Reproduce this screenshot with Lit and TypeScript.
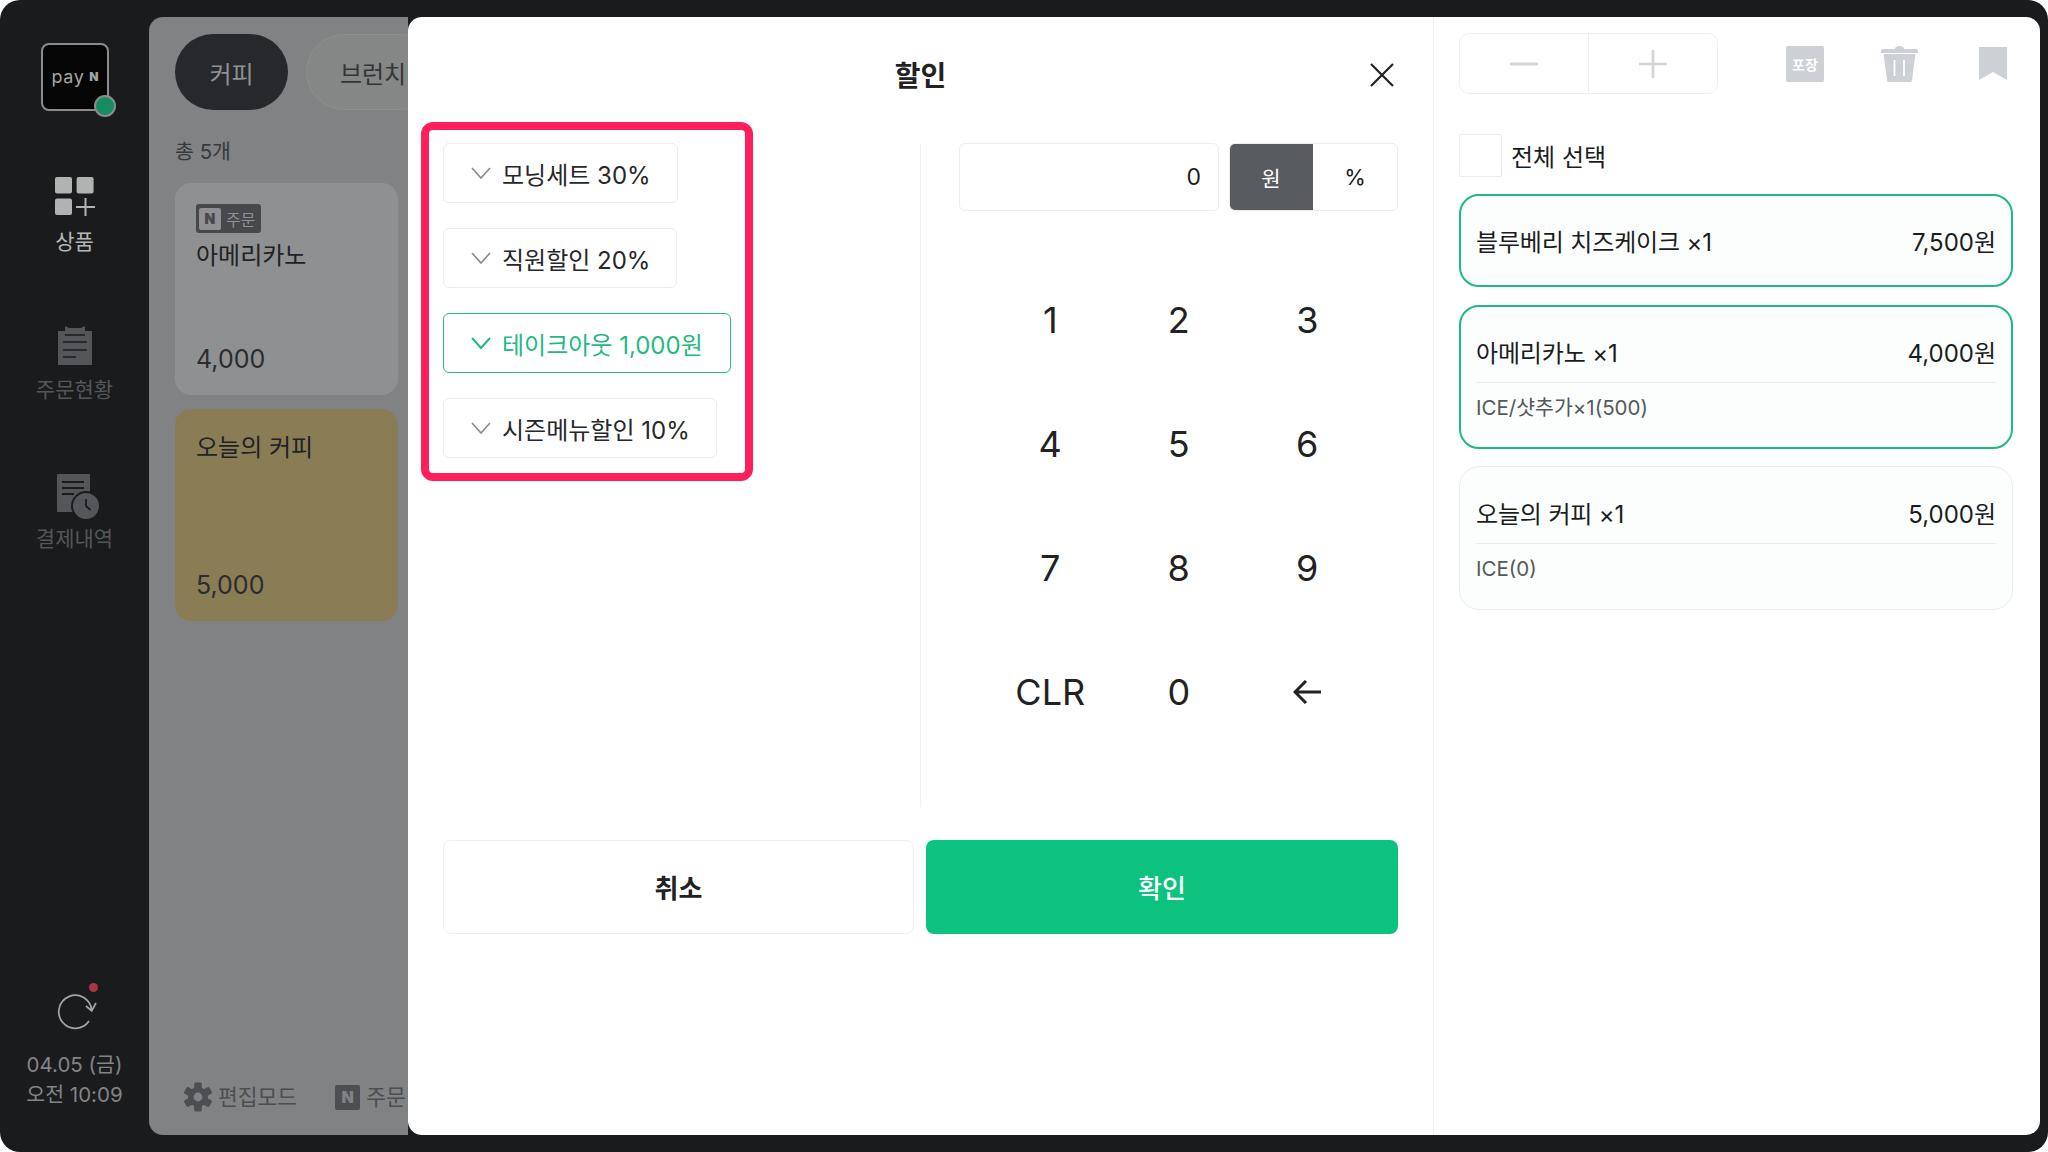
import { LitElement, html, css, svg } from "lit";
import { customElement } from "lit/decorators.js";

const gear = svg`<svg width="28" height="30" viewBox="0 0 28 30">
  <g fill="#4c4e51">
    <circle cx="14" cy="15" r="10"/>
    ${[0, 60, 120, 180, 240, 300].map(
      (a) => svg`<rect x="10.2" y="0.5" width="7.6" height="7" rx="1.5" transform="rotate(${a} 14 15)"/>`
    )}
  </g>
  <circle cx="14" cy="15" r="4.4" fill="#808284"/>
</svg>`;

const check = (c: string, w: number) => svg`<svg class="chk" width="20" height="14" viewBox="0 0 20 14"><path d="M1 2l9 10 9-10" fill="none" stroke="${c}" stroke-width="${w}"/></svg>`;

@customElement("app-root")
export class AppRoot extends LitElement {
  static styles = css`
    :host { display: block; width: 2048px; height: 1152px; background: #fff; font-family: Inter, "Noto Sans CJK KR", sans-serif; color: #1c1c1e; overflow: hidden; }
    * { box-sizing: border-box; }
    .frame { width: 2048px; height: 1152px; background: #1a1b1d; border-radius: 20px; display: flex; }
    .side { width: 149px; height: 1152px; display: flex; flex-direction: column; align-items: center; padding: 43px 0 42px; flex: none; }
    .logo { position: relative; width: 68px; height: 68px; margin-left: 1px; background: #050505; border: 2.5px solid #8b8c8d; border-radius: 8px; display: flex; align-items: center; justify-content: center; gap: 5px; color: #a3a4a4; font-size: 18px; line-height: 18px; letter-spacing: .6px; }
    .logo b { font-size: 12px; font-weight: 900; color: #a3a4a4; letter-spacing: 0; }
    .dot { position: absolute; right: -8.5px; bottom: -7.5px; width: 22px; height: 22px; border-radius: 50%; background: #168c60; border: 2px solid #8b8c8d; }
    .nav { display: flex; flex-direction: column; align-items: center; font-size: 21px; line-height: 26px; color: #54565a; white-space: nowrap; }
    .nav svg { display: block; }
    .n1 { margin-top: 66px; color: #b6b7b7; }
    .n1 svg { margin-left: 2px; }
    .n1 span { margin-top: 12px; }
    .n2 { margin-top: 68px; }
    .n2 span { margin-top: 12px; }
    .n3 { margin-top: 71px; }
    .n3 svg { margin-left: 8px; }
    .n3 span { margin-top: 7px; }
    .sideBottom { margin-top: auto; display: flex; flex-direction: column; align-items: center; font-size: 20.5px; line-height: 30px; color: #838485; white-space: nowrap; }
    .refresh { position: relative; width: 40px; height: 40px; margin: 0 0 20px 4px; }
    .refresh i { position: absolute; left: 32px; top: -7px; width: 9px; height: 9px; border-radius: 50%; background: #b0343f; }
    .main { flex: none; width: 1891px; height: 1118px; margin-top: 17px; display: flex; border-radius: 14px; overflow: hidden; }
    .under { flex: none; width: 259px; background: #808284; padding: 17px 0 23px 26px; display: flex; flex-direction: column; overflow: hidden; white-space: nowrap; }
    .pills { display: flex; gap: 18px; }
    .pill { flex: none; height: 76px; width: 113px; border-radius: 38px; display: flex; align-items: center; justify-content: center; font-size: 24px; background: #26282b; color: #8f9192; }
    .pill.off { width: 134px; background: #858686; border: 1px solid #8d8e8e; color: #333537; }
    .total { margin: 27px 0 16px; font-size: 20.5px; line-height: 30px; color: #37393b; }
    .card { width: 223px; height: 212px; border-radius: 16px; background: #8f9091; padding: 21px 0 19px 21px; display: flex; flex-direction: column; margin-bottom: 14px; color: #212224; }
    .card.y { background: #8a7d55; padding-top: 22px; }
    .badge { width: 65px; height: 29px; background: #46484b; border-radius: 3px; display: flex; align-items: center; gap: 5px; padding-left: 3px; font-size: 16px; color: #8f9091; margin-bottom: 6px; }
    .nbox { width: 22px; height: 22px; background: #8f9091; border-radius: 2px; color: #46484b; font-size: 14px; font-weight: 900; display: flex; align-items: center; justify-content: center; }
    .cname { font-size: 24px; line-height: 34px; }
    .cprice { margin-top: auto; font-size: 25px; line-height: 34px; color: #2b2c2e; }
    .tools { margin-top: auto; display: flex; align-items: center; padding-left: 9px; font-size: 21.5px; line-height: 30px; color: #4c4e51; }
    .tools span { margin-left: 6px; }
    .nsq { width: 25px; height: 25px; margin-left: 38px; background: #4c4e51; border-radius: 2px; color: #808284; font-size: 16px; font-weight: 900; display: flex; align-items: center; justify-content: center; }
    .modal { flex: none; width: 1025px; background: #fff; border-radius: 14px 0 0 14px; display: flex; flex-direction: column; }
    .mhead { position: relative; height: 105px; padding-top: 8px; display: flex; align-items: center; justify-content: center; }
    .title { font-size: 28px; font-weight: 600; color: #222; }
    .close { position: absolute; left: 962px; top: 46px; }
    .mbody { display: flex; height: 685px; }
    .left { flex: none; width: 512px; padding-left: 13px; }
    .redbox { width: 332px; height: 359px; border: 8px solid #ff1f5b; border-radius: 12px; padding: 13px 0 0 14px; display: flex; flex-direction: column; align-items: flex-start; gap: 26px; }
    .chip { height: 60px; padding: 0 26px 0 27px; border: 1px solid #ebebeb; border-radius: 6px; display: flex; align-items: center; gap: 11px; font-size: 24px; white-space: nowrap; color: #26272a; background: #fff; margin-bottom: -1px; }
    .chip.on { border: 1.5px solid #27bd8a; color: #1fb985; padding-right: 27px; }
    .vline { width: 1px; height: 664px; margin-top: 21px; background: #f1f1f2; flex: none; }
    .pad { width: 439px; margin-left: 38px; padding-top: 21px; flex: none; }
    .inrow { display: flex; gap: 10px; height: 68px; }
    .amount { width: 260px; border: 1px solid #ececec; border-radius: 6px; display: flex; align-items: center; justify-content: flex-end; padding-right: 17px; font-size: 23px; }
    .toggle { width: 169px; display: flex; border: 1px solid #ececec; border-radius: 6px; overflow: hidden; font-size: 22px; }
    .toggle div { flex: 1; display: flex; align-items: center; justify-content: center; }
    .toggle .act { background: #585b60; color: #fff; margin: -1px 0 -1px -1px; font-size: 21px; }
    .keys { display: grid; grid-template-columns: repeat(3, 128.5px); grid-template-rows: repeat(4, 124px); padding-left: 27px; margin-top: 47px; }
    .keys div { display: flex; align-items: center; justify-content: center; font-size: 36px; color: #222; }
    .mfoot { display: flex; gap: 12px; padding: 33px 35px 0; }
    .btn { height: 94px; border-radius: 8px; display: flex; align-items: center; justify-content: center; font-size: 26px; padding-bottom: 2px; }
    .cancel { width: 471px; border: 1px solid #efefef; font-weight: 600; color: #222; }
    .ok { width: 472px; background: #0bc27e; color: #fff; font-weight: 500; }
    .right { flex: 1; background: #fff; border-left: 1px solid #f0f0f0; border-radius: 0 14px 14px 0; padding: 16px 24px 0 25px; }
    .topbar { display: flex; align-items: center; height: 61px; }
    .stepper { width: 259px; height: 61px; display: flex; border: 1px solid #efefef; border-radius: 10px; }
    .stepper div { flex: 1; display: flex; align-items: center; justify-content: center; }
    .stepper div + div { border-left: 1px solid #efefef; }
    .slots { display: flex; margin-left: 40px; }
    .slot { width: 94px; display: flex; align-items: center; justify-content: center; }
    .pk { width: 38px; height: 36px; background: #cdd0d4; border-radius: 2px; color: #fff; font-size: 14px; font-weight: 600; display: flex; align-items: center; justify-content: center; }
    .all { display: flex; align-items: center; gap: 9px; margin-top: 40px; height: 43px; font-size: 24px; }
    .box { width: 43px; height: 43px; border: 1px solid #ebebeb; border-radius: 2px; }
    .item { width: 554px; border: 1px solid #e9ecec; border-radius: 20px; background: #fbfefd; padding: 0 16px 0 16px; }
    .item.sel { border: 2px solid #1fb985; padding: 0 15px 0 15px; }
    .i1 { height: 93px; margin-top: 17px; display: flex; align-items: center; padding-bottom: 2px; }
    .i2 { height: 144px; margin-top: 18px; }
    .i3 { height: 144px; margin-top: 17px; }
    .rowx { display: flex; width: 100%; justify-content: space-between; align-items: center; font-size: 24px; white-space: nowrap; }
    .rowx span:first-child { letter-spacing: -.15px; }
    .i2 .rowx, .i3 .rowx { height: 61px; margin-top: 14px; border-bottom: 1px solid #ececec; box-sizing: content-box; }
    .i3 .rowx { margin-top: 15px; }
    .sub { font-size: 20.5px; line-height: 50px; color: #55585c; }
  `;

  render() {
    return html`<div class="frame">
      <aside class="side">
        <div class="logo">pay<b>N</b><div class="dot"></div></div>
        <div class="nav n1">
          <svg width="41" height="40" viewBox="0 0 41 40"><g fill="#b1b2b2"><rect width="17" height="16.5" rx="2"/><rect x="21.6" width="17" height="16.5" rx="2"/><rect y="21.5" width="17" height="16.5" rx="2"/></g><path d="M21 30h19M30.5 21v18" stroke="#b1b2b2" stroke-width="2" fill="none"/></svg>
          <span>상품</span>
        </div>
        <div class="nav n2">
          <svg width="36" height="42" viewBox="0 0 36 42"><path d="M1 8h7V3l4 2h12l4-2v5h7v34H1z" fill="#54565a"/><path d="M8 12h20M6 19h24M6 27h24M6 34h13" stroke="#1a1b1d" stroke-width="1.6" fill="none"/></svg>
          <span>주문현황</span>
        </div>
        <div class="nav n3">
          <svg width="44" height="45" viewBox="0 0 44 45"><rect x="0" y="0" width="33" height="38" rx="1" fill="#54565a"/><path d="M5 8h22M5 14h22M5 20h12" stroke="#1a1b1d" stroke-width="1.8" fill="none"/><circle cx="29" cy="32" r="14" fill="#54565a" stroke="#1a1b1d" stroke-width="2"/><path d="M29 25v7l4.5 4" stroke="#1a1b1d" stroke-width="1.8" fill="none"/></svg>
          <span>결제내역</span>
        </div>
        <div class="sideBottom">
          <div class="refresh">
            <svg width="40" height="40" viewBox="0 0 40 40"><path d="M34.7 20A16.5 16.5 0 1 0 32 31M29 16l5.7 5 4.3-8" fill="none" stroke="#a4a5a5" stroke-width="1.7"/></svg>
            <i></i>
          </div>
          <div>04.05 (금)</div>
          <div>오전 10:09</div>
        </div>
      </aside>
      <div class="main">
        <section class="under">
          <div class="pills"><div class="pill">커피</div><div class="pill off">브런치</div></div>
          <div class="total">총 5개</div>
          <div class="card">
            <div class="badge"><div class="nbox">N</div>주문</div>
            <div class="cname">아메리카노</div>
            <div class="cprice">4,000</div>
          </div>
          <div class="card y">
            <div class="cname">오늘의 커피</div>
            <div class="cprice">5,000</div>
          </div>
          <div class="tools">${gear}<span>편집모드</span><div class="nsq">N</div><span>주문</span></div>
        </section>
        <section class="modal">
          <div class="mhead">
            <div class="title">할인</div>
            <svg class="close" width="24" height="24" viewBox="0 0 24 24"><path d="M1 1l22 22M23 1L1 23" stroke="#222" stroke-width="2.2" fill="none"/></svg>
          </div>
          <div class="mbody">
            <div class="left">
              <div class="redbox">
                <div class="chip">${check("#8b8d90", 1.7)}모닝세트 30%</div>
                <div class="chip">${check("#8b8d90", 1.7)}직원할인 20%</div>
                <div class="chip on">${check("#1fb985", 2)}테이크아웃 1,000원</div>
                <div class="chip">${check("#8b8d90", 1.7)}시즌메뉴할인 10%</div>
              </div>
            </div>
            <div class="vline"></div>
            <div class="pad">
              <div class="inrow">
                <div class="amount">0</div>
                <div class="toggle"><div class="act">원</div><div>%</div></div>
              </div>
              <div class="keys">
                <div>1</div><div>2</div><div>3</div>
                <div>4</div><div>5</div><div>6</div>
                <div>7</div><div>8</div><div>9</div>
                <div>CLR</div><div>0</div>
                <div><svg width="28" height="24" viewBox="0 0 28 24"><path d="M28 12H2M13 1L2 12l11 11" stroke="#222" stroke-width="3" fill="none"/></svg></div>
              </div>
            </div>
          </div>
          <div class="mfoot">
            <div class="btn cancel">취소</div>
            <div class="btn ok">확인</div>
          </div>
        </section>
        <section class="right">
          <div class="topbar">
            <div class="stepper">
              <div><svg width="28" height="4" viewBox="0 0 28 4"><path d="M0 2h28" stroke="#d3d5d8" stroke-width="3"/></svg></div>
              <div><svg width="28" height="28" viewBox="0 0 28 28"><path d="M0 14h28M14 0v28" stroke="#d3d5d8" stroke-width="2.6"/></svg></div>
            </div>
            <div class="slots">
              <div class="slot"><div class="pk">포장</div></div>
              <div class="slot"><svg width="37" height="37" viewBox="0 0 37 37"><path d="M14 4q0-3 4.500-3T23 4h12q2 0 2 3v1H0V7q0-3 2-3z M2.500 9h32L31 35q0 2-2 2H8q-2 0-2-2z" fill="#cdd0d4"/><path d="M13.500 15v16M23 15v16" stroke="#fff" stroke-width="1.800"/></svg></div>
              <div class="slot"><svg width="28" height="33" viewBox="0 0 28 33"><path d="M0 0h28v33L14 25 0 33z" fill="#cdd0d4"/></svg></div>
            </div>
          </div>
          <div class="all"><div class="box"></div>전체 선택</div>
          <div class="item sel i1"><div class="rowx"><span>블루베리 치즈케이크 ×1</span><span>7,500원</span></div></div>
          <div class="item sel i2"><div class="rowx"><span>아메리카노 ×1</span><span>4,000원</span></div><div class="sub">ICE/샷추가×1(500)</div></div>
          <div class="item i3"><div class="rowx"><span>오늘의 커피 ×1</span><span>5,000원</span></div><div class="sub">ICE(0)</div></div>
        </section>
      </div>
    </div>`;
  }
}
